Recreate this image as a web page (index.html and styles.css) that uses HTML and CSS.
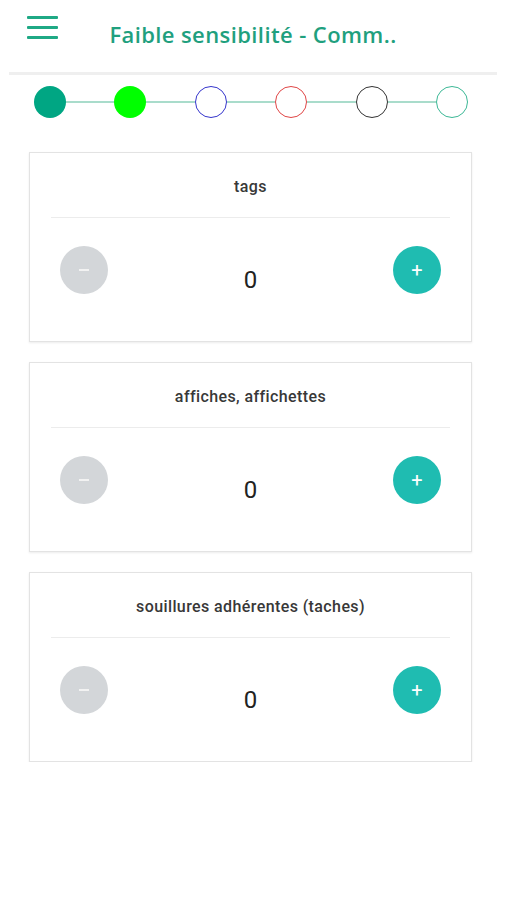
FILE: index.html
```html
<!DOCTYPE html>
<html lang="fr">
<head>
<meta charset="utf-8">
<title>Faible sensibilité</title>
<link rel="stylesheet" href="styles.css">
</head>
<body>
<header class="header">
  <div class="burger"><span></span><span></span><span></span></div>
  <h1 class="title">Faible sensibilité - Comm..</h1>
  <div class="spacer"></div>
</header>
<div class="header-line"></div>
<div class="steps">
  <span class="step s1"></span><span class="conn"></span>
  <span class="step s2"></span><span class="conn"></span>
  <span class="step s3"></span><span class="conn"></span>
  <span class="step s4"></span><span class="conn"></span>
  <span class="step s5"></span><span class="conn"></span>
  <span class="step s6"></span>
</div>
<main class="cards">
  <section class="card">
    <div class="card-title">tags</div>
    <div class="card-sep"></div>
    <div class="counter">
      <button class="btn minus"><span class="dash"></span></button>
      <span class="value">0</span>
      <button class="btn plus">+</button>
    </div>
  </section>
  <section class="card">
    <div class="card-title">affiches, affichettes</div>
    <div class="card-sep"></div>
    <div class="counter">
      <button class="btn minus"><span class="dash"></span></button>
      <span class="value">0</span>
      <button class="btn plus">+</button>
    </div>
  </section>
  <section class="card">
    <div class="card-title">souillures adhérentes (taches)</div>
    <div class="card-sep"></div>
    <div class="counter">
      <button class="btn minus"><span class="dash"></span></button>
      <span class="value">0</span>
      <button class="btn plus">+</button>
    </div>
  </section>
</main>
</body>
</html>
```
FILE: styles.css
```css
html, body {
  margin: 0;
  padding: 0;
  background: #ffffff;
  font-family: Roboto, "Noto Sans", sans-serif;
}
.header {
  display: grid;
  grid-template-columns: 85px 1fr 85px;
  height: 72px;
}
.burger {
  display: flex;
  flex-direction: column;
  gap: 7px;
  padding: 16px 0 0 27px;
}
.burger span {
  display: block;
  width: 31px;
  height: 3px;
  background: #1fa985;
  border-radius: 1px;
}
.title {
  margin: 0;
  padding-top: 20px;
  text-align: center;
  font-family: "Open Sans", "Noto Sans", sans-serif;
  font-weight: 600;
  font-size: 22px;
  letter-spacing: 0.4px;
  line-height: 28px;
  color: #1fa07e;
  white-space: nowrap;
}
.header-line {
  height: 3px;
  margin: 0 9px;
  background: #efefef;
}
.steps {
  display: flex;
  align-items: center;
  padding: 11px 38px 0 34px;
}
.step {
  flex: none;
  width: 32px;
  height: 32px;
  border-radius: 50%;
  box-sizing: border-box;
}
.conn {
  flex: 1;
  height: 2px;
  background: #a9dccb;
}
.s1 { background: #00a683; }
.s2 { background: #00ff00; }
.s3 { border: 1px solid #3535cc; }
.s4 { border: 1px solid #e04545; }
.s5 { border: 1px solid #333333; }
.s6 { border: 1px solid #3cb896; }
.cards {
  display: flex;
  flex-direction: column;
  gap: 20px;
  padding: 34px 34px 0 29px;
}
.card {
  height: 190px;
  box-sizing: border-box;
  border: 1px solid #e3e3e3;
  box-shadow: 0 1px 2px rgba(0,0,0,0.08);
}
.card-title {
  height: 64px;
  padding-top: 2px;
  box-sizing: border-box;
  display: flex;
  align-items: center;
  justify-content: center;
  font-size: 16px;
  letter-spacing: 0.4px;
  font-weight: 500;
  color: #383838;
}
.card-sep {
  height: 1px;
  margin: 0 21px;
  background: #ececec;
}
.counter {
  display: flex;
  justify-content: space-between;
  align-items: flex-start;
  padding: 28px 30px 0 30px;
}
.btn {
  width: 48px;
  height: 48px;
  border-radius: 50%;
  border: none;
  padding: 0;
  display: flex;
  align-items: center;
  justify-content: center;
  color: #ffffff;
  font-family: Roboto, sans-serif;
}
.minus { background: #d3d6d9; }
.dash {
  display: block;
  width: 10px;
  height: 2px;
  background: #f2f2f2;
}
.plus {
  background: #1fbcb1;
  font-size: 20px;
  font-weight: 400;
  line-height: 1;
}
.value {
  margin-top: 20px;
  font-size: 24px;
  line-height: 28px;
  color: #222222;
}
```
